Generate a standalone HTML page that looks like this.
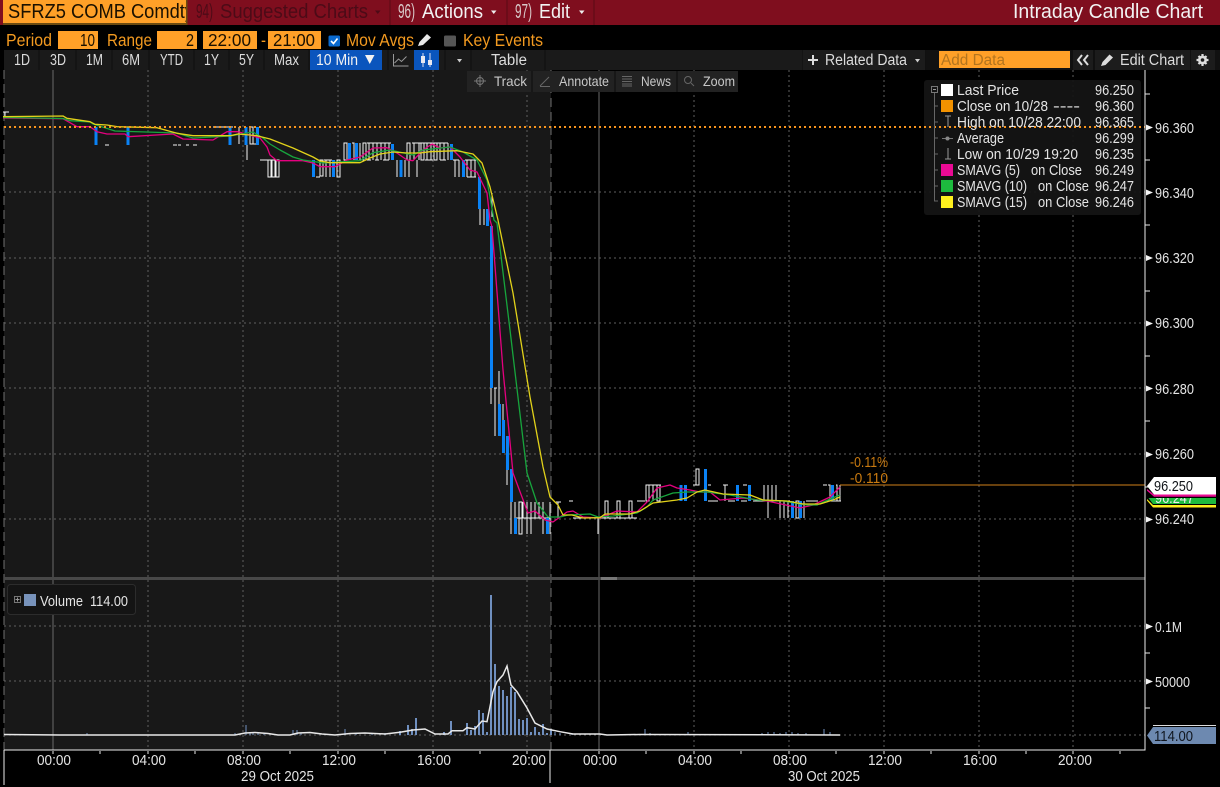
<!DOCTYPE html>
<html><head><meta charset="utf-8"><title>Intraday Candle Chart</title>
<style>
html,body{margin:0;padding:0;background:#000;width:1220px;height:787px;overflow:hidden}
svg{display:block}
text{font-family:"Liberation Sans",sans-serif;font-size:14.500px;fill:#e4e4e4}
.h{font-size:20px;fill:#f2f2f2}
.o{font-size:17.500px;fill:#f39a20}
.k{font-size:17.500px;fill:#1a1000}
.t{font-size:15.500px;fill:#dcdcdc}
.f{font-size:14px;fill:#c8c8c8}
.a{fill:#e6e6e6}
.c{shape-rendering:crispEdges}
</style></head><body>
<svg width="1220" height="787" viewBox="0 0 1220 787" xmlns="http://www.w3.org/2000/svg">
<rect width="1220" height="787" fill="#000"/>
<!-- header -->
<rect x="0" y="0" width="1220" height="25" fill="#7f0e1e"/>
<rect x="3" y="0" width="184" height="25" fill="#ffa028"/>
<rect x="3" y="23" width="184" height="2" fill="#6b4a10"/>
<text x="8" y="18" class="h" style="fill:#1a1000" textLength="186" lengthAdjust="spacingAndGlyphs">SFRZ5 COMB Comdty</text>
<rect x="186" y="0" width="1.500" height="25" fill="#6b4a10"/>
<rect x="187.500" y="0" width="12" height="25" fill="#7f0e1e"/>
<path class="c" d="M390 0V25M507 0V25M594 0V25" stroke="#5a0a14" stroke-width="1"/>
<text x="196" y="18" class="h" style="fill:#4c0b17" textLength="17" lengthAdjust="spacingAndGlyphs">94)</text>
<text x="220" y="18" class="h" style="fill:#4c0b17" textLength="148" lengthAdjust="spacingAndGlyphs">Suggested Charts</text>
<path d="M375 10.500h5.500l-2.750 3.500z" fill="#4c0b17"/>
<text x="398" y="18" class="h" style="fill:#d8c8c8" textLength="17" lengthAdjust="spacingAndGlyphs">96)</text>
<text x="422" y="18" class="h" textLength="61" lengthAdjust="spacingAndGlyphs">Actions</text>
<path d="M491 10.500h5.500l-2.750 3.500z" fill="#eee"/>
<text x="515" y="18" class="h" style="fill:#d8c8c8" textLength="17" lengthAdjust="spacingAndGlyphs">97)</text>
<text x="539" y="18" class="h" textLength="31" lengthAdjust="spacingAndGlyphs">Edit</text>
<path d="M579 10.500h5.500l-2.750 3.500z" fill="#eee"/>
<text x="1013" y="18" class="h" textLength="190" lengthAdjust="spacingAndGlyphs">Intraday Candle Chart</text>

<!-- row 2 -->
<text x="6" y="46" class="o" textLength="46" lengthAdjust="spacingAndGlyphs">Period</text>
<rect x="58" y="31" width="40" height="18" fill="#ffa028"/>
<text x="80" y="46" class="k" textLength="15" lengthAdjust="spacingAndGlyphs">10</text>
<text x="107" y="46" class="o" textLength="45" lengthAdjust="spacingAndGlyphs">Range</text>
<rect x="157" y="31" width="40" height="18" fill="#ffa028"/>
<text x="186" y="46" class="k" textLength="8" lengthAdjust="spacingAndGlyphs">2</text>
<rect x="203" y="31" width="54" height="18" fill="#ffa028"/>
<text x="208" y="46" class="k" textLength="43" lengthAdjust="spacingAndGlyphs">22:00</text>
<text x="261" y="46" class="o" textLength="5" lengthAdjust="spacingAndGlyphs">-</text>
<rect x="268" y="31" width="53" height="18" fill="#ffa028"/>
<text x="273" y="46" class="k" textLength="42" lengthAdjust="spacingAndGlyphs">21:00</text>
<rect x="328.500" y="35.500" width="11.500" height="11" rx="1.500" fill="#0a6ad0"/>
<path d="M331 41l2.500 2.500 4-5" stroke="#fff" stroke-width="1.600" fill="none"/>
<text x="346" y="46" class="o" textLength="68" lengthAdjust="spacingAndGlyphs">Mov Avgs</text>
<path d="M418 46l1.500-4 7.500-8 4 3.500-8 7.500z" fill="#e8e8e8"/>
<rect x="444" y="35.500" width="12" height="11" rx="1.500" fill="#555"/>
<text x="463" y="46" class="o" textLength="80" lengthAdjust="spacingAndGlyphs">Key Events</text>

<!-- row 3 toolbar -->
<rect x="4" y="50" width="800" height="20" fill="#1a1a1a"/>
<rect x="804" y="50" width="416" height="20" fill="#111"/>
<path class="c" d="M39 50V70M76 50V70M112 50V70M149 50V70M194 50V70M229 50V70M264 50V70M309 50V70M388 50V70M445 50V70M471 50V70M545 50V70M803 50V70M925 50V70M1072 50V70M1094 50V70M1190 50V70" stroke="#0e0e0e" stroke-width="1"/>
<rect x="803" y="50" width="122" height="20" fill="#1c1c1c"/>
<rect x="1073" y="50" width="20" height="20" fill="#1c1c1c"/>
<rect x="1095" y="50" width="95" height="20" fill="#1c1c1c"/>
<rect x="1191" y="50" width="24" height="20" fill="#1c1c1c"/>
<text x="14" y="65" class="t" textLength="16" lengthAdjust="spacingAndGlyphs">1D</text>
<text x="50" y="65" class="t" textLength="16" lengthAdjust="spacingAndGlyphs">3D</text>
<text x="86" y="65" class="t" textLength="17" lengthAdjust="spacingAndGlyphs">1M</text>
<text x="122" y="65" class="t" textLength="18" lengthAdjust="spacingAndGlyphs">6M</text>
<text x="160" y="65" class="t" textLength="23" lengthAdjust="spacingAndGlyphs">YTD</text>
<text x="204" y="65" class="t" textLength="15" lengthAdjust="spacingAndGlyphs">1Y</text>
<text x="239" y="65" class="t" textLength="15" lengthAdjust="spacingAndGlyphs">5Y</text>
<text x="274" y="65" class="t" textLength="25" lengthAdjust="spacingAndGlyphs">Max</text>
<rect x="310" y="50" width="72" height="20" fill="#0a55bd"/>
<text x="316" y="65" class="t" style="fill:#f2f2f2" textLength="42" lengthAdjust="spacingAndGlyphs">10 Min</text>
<path d="M365 55h9.500l-4.750 9z" fill="#f2f2f2"/>
<path d="M393.500 54v12h15M394.500 63l4-4 3 2.500 5-5" stroke="#999" stroke-width="1" fill="none"/>
<rect x="414" y="50" width="25" height="20" fill="#0a55bd"/>
<path d="M423 53v14M430 53v14" stroke="#dde" stroke-width="1"/>
<rect x="421" y="56" width="4" height="7" fill="#e8e8f0"/><rect x="428" y="60" width="4" height="5" fill="#e8e8f0"/>
<path d="M457 59h5l-2.500 3.500z" fill="#ccc"/>
<text x="491" y="65" class="t" textLength="36" lengthAdjust="spacingAndGlyphs">Table</text>
<path d="M808 60h10M813 55v10" stroke="#ddd" stroke-width="2"/>
<text x="825" y="65" class="t" textLength="82" lengthAdjust="spacingAndGlyphs">Related Data</text>
<path d="M915 59h5l-2.500 3.500z" fill="#ccc"/>
<rect x="939" y="51" width="131" height="17" fill="#ffa028"/>
<text x="941" y="65" class="t" style="fill:#b3751f" textLength="64" lengthAdjust="spacingAndGlyphs">Add Data</text>
<path d="M1082 55l-4 5 4 5M1088 55l-4 5 4 5" stroke="#ddd" stroke-width="2" fill="none"/>
<path d="M1101 66l1.500-4 7-7.500 3.500 3-7.500 7.500z" fill="#ddd"/>
<text x="1120" y="65" class="t" textLength="64" lengthAdjust="spacingAndGlyphs">Edit Chart</text>
<path d="M1202.500 54v12M1196.500 60h12M1198.500 56l8 8M1206.500 56l-8 8" stroke="#ddd" stroke-width="2.200"/>
<circle cx="1202.500" cy="60" r="4.500" fill="#ddd"/>
<circle cx="1202.500" cy="60" r="1.800" fill="#1c1c1c"/>

<!-- chart background -->
<rect x="4" y="70" width="547" height="680" fill="#181818"/>

<!-- grid -->
<g class="c" fill="none" stroke="#5f5f5f" stroke-width="1" stroke-dasharray="2 3">
<path d="M148 70V577M243 70V577M338 70V577M433 70V577M527 70V577M694 70V577M789 70V577M884 70V577M979 70V577M1073 70V577"/>
<path d="M148 580V750M243 580V750M338 580V750M433 580V750M527 580V750M694 580V750M789 580V750M884 580V750M979 580V750M1073 580V750"/>
<path d="M4 192H1145M4 258H1145M4 323H1145M4 388H1145M4 454H1145M4 519H1145M4 626H1145M4 681H1145M4 735H1145"/>
</g>
<path class="c" d="M53 70V577M53 580V750M599 70V577M599 580V750" stroke="#6a6a6a" stroke-width="1"/>
<path class="c" d="M4 70V750M551 70V750" stroke="#707070" stroke-width="1" stroke-dasharray="9 5"/>

<!-- white candles -->
<g class="c" fill="none" stroke="#f4f4f4" stroke-width="1">
<path d="M3 112h6M5 112v5M105 145h4M173 145h4M178 145h3M186 145h3M193 145h4M213 127h20M239 127v17M247 127v33M250 127h3v17h-3zM253 144h3M260 160h8"/>
<path d="M268 160h3v17h-3zM272 160h3v17h-3zM276 160h3v17h-3zM316 177h4M320 160h3v16h-3zM326 160v17M330 160v17M324 160h8M337 160h3v17h-3z"/>
<path d="M344 143h3v17h-3zM352 143h2v17M360 143v17M363 143h3v17h-3zM369 143v17M373 143v17M377 143v17M381 143v17M385 143v17M389 143v17M367 143h24M367 160h4M375 160h4M383 160h6"/>
<path d="M397 160v17M405 160v17M409 160v17M417 160v17M407 143h3v17h-3zM414 143v17M417 143h2v17M421 143h3v17h-3zM427 143v17M431 143v17M434 143h3v17h-3zM440 143v17M444 143v17M448 143v17M412 143h36M425 160h8M440 160h6"/>
<path d="M455 160v17M459 160v17M467 160v17M471 160v17M475 160v17M453 160h6M465 160h11M467 177h9"/>
<path d="M480 209v16M484 209v16M492 193v24"/>
<path d="M491 388v16M495 388v48M494 388h3M499 371v33M503 404v16M507 470v15"/>
<path d="M511 502v32M515 502v16M519 502h3v32h-3zM523 502v16M527 502v32M531 502v32M535 502v16M539 502v16M543 502v32M550 502v32M516 518h34"/>
<path d="M558 502v16M556 502h5M569 501h4M573 518h25M598 518v16"/>
<path d="M605 501h3v17h-3zM617 501h3v17h-3zM629 501h3v17h-3zM600 518h37M637 501h8"/>
<path d="M646 485h3v16h-3zM653 485v16M657 485h3v16h-3zM649 485h12"/>
<path d="M696 469h3v16h-3zM693 485h6M708 485h3M708 501h10M725 485v16M723 485h5M728 501h7M741 501h6M743 485h4M753 501h11"/>
<path d="M764 485v16M768 485v33M772 485v16M776 485v16M780 501v17M784 501v17M788 501v17M762 501h28M796 501h3v17h-3zM804 501v17M806 501h12"/>
<path d="M823 485h4M828 485h2v16M836 485h1v16M840 485v16M827 501h14"/>
</g>
<!-- blue candles -->
<g class="c" fill="none" stroke="#0a82f5" stroke-width="3">
<path d="M96 127v18M128 127v18M230 127v18M246 127v18M257.500 127v18"/>
<path d="M313.500 160v17M333.500 160v17M349.500 143v17M356.500 143v17M392.500 144v16M401 160v17M451.500 144v16M463.500 160v17M479.500 177v32M487.500 209v17M491.500 226v162M499.500 404v32M503.500 420v33M507.500 436v34M511.500 469v33M515.500 518v16M547.500 518v16"/>
<path d="M681 485v16M685.500 485v16M705.500 469v32M737.500 485v16M749.500 485v16M792.500 501v17M800.500 501v17M832.500 485v16"/>
</g>
<!-- moving averages -->
<g fill="none" stroke-width="1.300" stroke-linejoin="round">
<path stroke="#e5007f" d="M3 118L63 118.700 77 126.700 90 126.700 97 131.700 107 134 125 134 128 136.700 173 134 183 139 213 140 227 131.700 238 131.700 260 138 267 147 270 155 277 160.700 303 160.700 313 163 320 166.700 335 166.700 347 160 360 157 373 148 387 147.700 397 153 407 160 413 160.700 423 150 432 144 440 148 450 147 460 157 470 170 477 172 487 193 490 220 492 227 503 370 513 473 528 513 535 511 545 520 553 522 567 512 573 511 583 517 600 518 617 511 637 512 647 502 657 488 670 485 677 488 690 490 700 492 710 492 720 500 743 498 767 501 800 508 813 505 830 497 840 487"/>
<path stroke="#17a53d" d="M3 117.500L63 118.500 70 120.700 90 122 93 124 115 131 177 133 193 138 213 137 230 136 253 132 263 138 270 144 280 150 293 157 303 160 317 162 323 163 360 160.700 373 152.700 390 150 413 155 423 150 450 147 463 152 477 160 487 180 494 220 497 223 510 330 527 473 537 503 548 517 560 517 568 515 590 514 598 517 613 516 637 513 647 507 653 500 673 493 687 492 707 492 730 495 757 500 783 501 807 505 817 505 830 499 840 495"/>
<path stroke="#e2d21a" d="M3 116.700L63 116 67 118.300 90 121.700 95 124.300 107 125 117 126.700 157 127.700 177 133.300 193 135.700 230 135.700 238 134 257 135.700 270 139 293 148 313 157 320 161 330 162.700 360 162.700 370 158 380 154 393 152 407 153 420 153 430 151.700 457 150.700 473 154 482 163 490 187 498 220 513 293 530 397 543 467 550 497 558 505 563 515 572 515 583 518 600 517.700 605 514 630 514 640 511 653 503 677 500 687 498 697 492 705 490 723 494 750 495 763 500 787 501 803 504 820 504 833 500 840 497"/>
</g>

<!-- legend box -->
<rect x="924" y="80" width="217" height="135" rx="3" fill="#141414" fill-opacity=".93"/>
<!-- orange lines -->
<path class="c" d="M4 127H1145" stroke="#f7941d" stroke-width="2" stroke-dasharray="2 3"/>
<path class="c" d="M840 485H1145" stroke="#d0811a" stroke-width="1"/>
<text x="850" y="467" style="fill:#c97a10" textLength="38" lengthAdjust="spacingAndGlyphs">-0.11%</text>
<text x="850" y="483" style="fill:#c97a10" textLength="38" lengthAdjust="spacingAndGlyphs">-0.110</text>

<!-- legend content -->
<rect x="931.500" y="86.500" width="6" height="6" fill="none" stroke="#777"/>
<path d="M933 89.500h3" stroke="#999"/>
<path d="M934.500 93V201H938M934.500 106H938M934.500 122H938M934.500 138H938M934.500 154H938M934.500 170H938M934.500 186H938" stroke="#666" fill="none"/>
<rect x="941" y="84" width="12" height="12" fill="#fff"/>
<rect x="941" y="100" width="12" height="12" fill="#f39200"/>
<path d="M945 116h6M948 116v11" stroke="#999" fill="none"/>
<path d="M942 138.500h11" stroke="#777"/><circle cx="947.500" cy="138.500" r="2" fill="#888"/>
<path d="M948 148v11M945 159h6" stroke="#999" fill="none"/>
<rect x="941" y="164" width="12" height="12" fill="#ea0a94"/>
<rect x="941" y="180" width="12" height="12" fill="#1dbb3e"/>
<rect x="941" y="196" width="12" height="12" fill="#fff01e"/>
<g>
<text x="957" y="95" textLength="62" lengthAdjust="spacingAndGlyphs">Last Price</text>
<text x="957" y="111" textLength="91" lengthAdjust="spacingAndGlyphs">Close on 10/28</text>
<text x="1053" y="111" textLength="27" lengthAdjust="spacingAndGlyphs">----</text>
<text x="957" y="127" textLength="124" lengthAdjust="spacingAndGlyphs">High on 10/28 22:00</text>
<text x="957" y="143" textLength="47" lengthAdjust="spacingAndGlyphs">Average</text>
<text x="957" y="159" textLength="121" lengthAdjust="spacingAndGlyphs">Low on 10/29 19:20</text>
<text x="957" y="175" textLength="63" lengthAdjust="spacingAndGlyphs">SMAVG (5)</text>
<text x="1031" y="175" textLength="51" lengthAdjust="spacingAndGlyphs">on Close</text>
<text x="957" y="191" textLength="70" lengthAdjust="spacingAndGlyphs">SMAVG (10)</text>
<text x="1038" y="191" textLength="51" lengthAdjust="spacingAndGlyphs">on Close</text>
<text x="957" y="207" textLength="70" lengthAdjust="spacingAndGlyphs">SMAVG (15)</text>
<text x="1038" y="207" textLength="51" lengthAdjust="spacingAndGlyphs">on Close</text>
<text x="1095" y="95" textLength="39" lengthAdjust="spacingAndGlyphs">96.250</text>
<text x="1095" y="111" textLength="39" lengthAdjust="spacingAndGlyphs">96.360</text>
<text x="1095" y="127" textLength="39" lengthAdjust="spacingAndGlyphs">96.365</text>
<text x="1095" y="143" textLength="39" lengthAdjust="spacingAndGlyphs">96.299</text>
<text x="1095" y="159" textLength="39" lengthAdjust="spacingAndGlyphs">96.235</text>
<text x="1095" y="175" textLength="39" lengthAdjust="spacingAndGlyphs">96.249</text>
<text x="1095" y="191" textLength="39" lengthAdjust="spacingAndGlyphs">96.247</text>
<text x="1095" y="207" textLength="39" lengthAdjust="spacingAndGlyphs">96.246</text>
</g>

<!-- floating tool strip -->
<rect x="467" y="71" width="271" height="21" fill="#222"/>
<path class="c" d="M532 71V92M615 71V92M677 71V92" stroke="#0c0c0c"/>
<circle cx="480" cy="81" r="3.500" fill="none" stroke="#777"/>
<path d="M474 81h12M480 75v12" stroke="#777"/>
<text x="494" y="86" class="f" textLength="33" lengthAdjust="spacingAndGlyphs">Track</text>
<path d="M540 86l9-9M540 86.500h10" stroke="#666" fill="none"/>
<text x="559" y="86" class="f" textLength="50" lengthAdjust="spacingAndGlyphs">Annotate</text>
<path d="M622 76.500h10M622 79h10M622 81.500h10M622 84h10M622 86h10" stroke="#666"/>
<text x="641" y="86" class="f" textLength="30" lengthAdjust="spacingAndGlyphs">News</text>
<circle cx="688" cy="80" r="3.500" fill="none" stroke="#666"/><path d="M691 83l3 3" stroke="#666"/>
<text x="703" y="86" class="f" textLength="32" lengthAdjust="spacingAndGlyphs">Zoom</text>

<!-- splitter -->
<rect x="4" y="577" width="1141" height="3" fill="#484848"/>
<rect x="601" y="577" width="16" height="3" fill="#777"/>

<!-- volume bars -->
<g class="c" fill="none" stroke="#6f8fbf" stroke-width="2">
<path d="M491 735V595M495 735V664M499 735V686M503 735V690M507 735V696M511 735V687M515 735V692M519 735V719M523 735V720M527 735V718M531 735V732M535 735V727M539 735V732M543 735V724M547 735V733M551 735V729M479 735V710M483 735V713M487 735V732M467 735V723M471 735V730M475 735V726M451 735V721M416 735V718M408 735V725M444 735V732M412 735V729M400 735V731"/>
</g>
<g class="c" fill="none" stroke="#6f8fbf" stroke-width="1">
<path d="M87 735V733M235 735V733M246 735V725M250 735V733M253 735V732M258 735V733M264 735V734M293 735V730M297 735V730M301 735V733M345 735V729M356 735V733M372 735V733M385 735V733M555 735V732M560 735V733M572 735V733M645 735V729M650 735V733M688 735V732M762 735V733M768 735V732M774 735V732M780 735V733M786 735V732M792 735V732M798 735V733M806 735V733M824 735V729M830 735V732"/>
</g>
<path fill="none" stroke="#e8e8e8" stroke-width="1.500" d="M4 734.500L60 735 235 735 245 733 255 732.500 268 733.500 278 735 290 735 298 733 310 732.500 322 734 335 735 350 733.500 365 733 385 734 400 732.300 413 730 425 729 435 734 448 734 452 730.700 463 730.700 467 727.700 475 729 482 721 487 721.700 493 691.700 497 681.700 503 675 507 666 511 685 517 691.700 527 708 535 723 547 729 560 731.700 573 734 600 734 607 735 640 734.500 840 735"/>

<!-- axes -->
<path class="c" d="M1145 70V750H4M4 750V785M550 750V783" stroke="#ececec" stroke-width="1" fill="none"/>
<path class="c" d="M53 751v3M100 751v3M148 751v3M195 751v3M243 751v3M290 751v3M338 751v3M385 751v3M433 751v3M480 751v3M527 751v3M599 751v3M646 751v3M694 751v3M741 751v3M789 751v3M836 751v3M884 751v3M931 751v3M979 751v3M1026 751v3M1073 751v3M1120 751v3" stroke="#e8e8e8"/>
<path class="c" d="M1145 94h5M1145 160h5M1145 225h5M1145 291h5M1145 356h5M1145 421h5M1145 487h5M1145 653h5M1145 708h5" stroke="#e8e8e8"/>
<path d="M1146 124.500l7 3-7 3zM1146 189.500l7 3-7 3zM1146 255l7 3-7 3zM1146 320.500l7 3-7 3zM1146 385.500l7 3-7 3zM1146 451.500l7 3-7 3zM1146 516.500l7 3-7 3zM1146 623.500l7 3-7 3zM1146 678.500l7 3-7 3z" fill="#f4f4f4"/>
<g class="a">
<text x="1155" y="133" textLength="39" lengthAdjust="spacingAndGlyphs">96.360</text>
<text x="1155" y="198" textLength="39" lengthAdjust="spacingAndGlyphs">96.340</text>
<text x="1155" y="263" textLength="39" lengthAdjust="spacingAndGlyphs">96.320</text>
<text x="1155" y="328" textLength="39" lengthAdjust="spacingAndGlyphs">96.300</text>
<text x="1155" y="394" textLength="39" lengthAdjust="spacingAndGlyphs">96.280</text>
<text x="1155" y="459" textLength="39" lengthAdjust="spacingAndGlyphs">96.260</text>
<text x="1155" y="524" textLength="39" lengthAdjust="spacingAndGlyphs">96.240</text>
<text x="1155" y="632" textLength="27" lengthAdjust="spacingAndGlyphs">0.1M</text>
<text x="1155" y="687" textLength="35" lengthAdjust="spacingAndGlyphs">50000</text>
</g>
<!-- price tags -->
<path d="M1147 496l6 2h63v6h-63z" fill="#1dbb3e" transform="translate(0 0)"/>
<text x="1155" y="503" style="fill:#eee" textLength="39" lengthAdjust="spacingAndGlyphs">96.247</text>
<rect x="1147" y="493" width="70" height="5" fill="#000"/>
<path d="M1147 499l6 6h63v2.500h-63l-6-7z" fill="#fff01e"/>
<path d="M1147 489l7 5.500h62v2.200h-62l-7-6z" fill="#ea0a94"/>
<path d="M1154 477h62v17.500h-62l-7-8.500z" fill="#fff"/>
<text x="1154" y="491" style="fill:#101418" textLength="39" lengthAdjust="spacingAndGlyphs">96.250</text>
<path d="M1153 725.500h63" stroke="#ddd" stroke-width="1"/>
<path d="M1153 727h63v17h-63l-6-8.500z" fill="#6d89b0"/>
<text x="1154" y="741" style="fill:#10161f" textLength="39" lengthAdjust="spacingAndGlyphs">114.00</text>

<!-- volume legend -->
<rect x="7.500" y="584.500" width="128" height="30" rx="3" fill="#141414" stroke="#2c2c2c"/>
<rect x="14.500" y="596.500" width="6" height="6" fill="none" stroke="#777"/>
<path d="M15.500 599.500h4M17.500 597.500v4" stroke="#999"/>
<rect x="24" y="594" width="12" height="12" fill="#7893bb"/>
<text x="40" y="606" textLength="43" lengthAdjust="spacingAndGlyphs">Volume</text>
<text x="90" y="606" textLength="38" lengthAdjust="spacingAndGlyphs">114.00</text>

<!-- time labels -->
<g>
<text x="37" y="765" textLength="34" lengthAdjust="spacingAndGlyphs">00:00</text>
<text x="132" y="765" textLength="34" lengthAdjust="spacingAndGlyphs">04:00</text>
<text x="227" y="765" textLength="34" lengthAdjust="spacingAndGlyphs">08:00</text>
<text x="322" y="765" textLength="34" lengthAdjust="spacingAndGlyphs">12:00</text>
<text x="417" y="765" textLength="34" lengthAdjust="spacingAndGlyphs">16:00</text>
<text x="512" y="765" textLength="34" lengthAdjust="spacingAndGlyphs">20:00</text>
<text x="583" y="765" textLength="34" lengthAdjust="spacingAndGlyphs">00:00</text>
<text x="678" y="765" textLength="34" lengthAdjust="spacingAndGlyphs">04:00</text>
<text x="773" y="765" textLength="34" lengthAdjust="spacingAndGlyphs">08:00</text>
<text x="868" y="765" textLength="34" lengthAdjust="spacingAndGlyphs">12:00</text>
<text x="963" y="765" textLength="34" lengthAdjust="spacingAndGlyphs">16:00</text>
<text x="1058" y="765" textLength="34" lengthAdjust="spacingAndGlyphs">20:00</text>
<text x="241" y="781" textLength="73" lengthAdjust="spacingAndGlyphs">29 Oct 2025</text>
<text x="788" y="781" textLength="72" lengthAdjust="spacingAndGlyphs">30 Oct 2025</text>
</g>
</svg>
</body></html>
